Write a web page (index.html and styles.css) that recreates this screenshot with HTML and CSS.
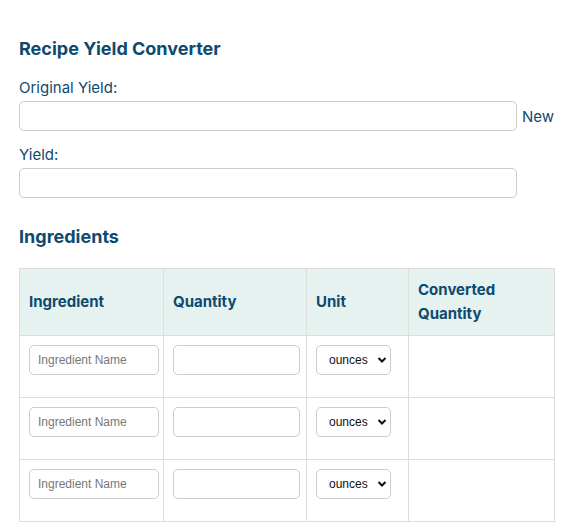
FILE: index.html
```html
<!DOCTYPE html>
<html lang="en">
<head>
<meta charset="utf-8">
<title>Recipe Yield Converter</title>
<link rel="stylesheet" href="styles.css">
</head>
<body>
<div class="page">
  <h2 class="title">Recipe Yield Converter</h2>
  <label class="field-label" for="orig">Original Yield:</label>
  <div class="yield-row">
    <input class="yield-input" id="orig" type="text">
    <span class="inline-label">New</span>
  </div>
  <label class="field-label" for="newy">Yield:</label>
  <div class="yield-row">
    <input class="yield-input" id="newy" type="text">
  </div>

  <h2 class="title section">Ingredients</h2>
  <table class="ing-table">
    <colgroup>
      <col class="c1"><col class="c2"><col class="c3"><col class="c4">
    </colgroup>
    <thead>
      <tr>
        <th>Ingredient</th>
        <th>Quantity</th>
        <th>Unit</th>
        <th>Converted Quantity</th>
      </tr>
    </thead>
    <tbody>
      <tr>
        <td><input class="cell-input name" type="text" placeholder="Ingredient Name"></td>
        <td><input class="cell-input qty" type="text"></td>
        <td><span class="select-wrap"><select class="unit"><option>ounces</option></select><svg class="chev" viewBox="0 0 10 8" width="10" height="8"><path d="M1.5 2 L5 5.5 L8.5 2" fill="none" stroke="#111" stroke-width="2"/></svg></span></td>
        <td></td>
      </tr>
      <tr>
        <td><input class="cell-input name" type="text" placeholder="Ingredient Name"></td>
        <td><input class="cell-input qty" type="text"></td>
        <td><span class="select-wrap"><select class="unit"><option>ounces</option></select><svg class="chev" viewBox="0 0 10 8" width="10" height="8"><path d="M1.5 2 L5 5.5 L8.5 2" fill="none" stroke="#111" stroke-width="2"/></svg></span></td>
        <td></td>
      </tr>
      <tr>
        <td><input class="cell-input name" type="text" placeholder="Ingredient Name"></td>
        <td><input class="cell-input qty" type="text"></td>
        <td><span class="select-wrap"><select class="unit"><option>ounces</option></select><svg class="chev" viewBox="0 0 10 8" width="10" height="8"><path d="M1.5 2 L5 5.5 L8.5 2" fill="none" stroke="#111" stroke-width="2"/></svg></span></td>
        <td></td>
      </tr>
    </tbody>
  </table>
</div>
</body>
</html>
```
FILE: styles.css
```css
html, body {
  margin: 0;
  padding: 0;
  background: #ffffff;
}
body {
  font-family: Inter, "Liberation Sans", Arial, sans-serif;
  color: #0e4a6f;
}
.page {
  padding: 38px 17px 0 19px;
}
.title {
  margin: 0;
  font-size: 18px;
  line-height: 22px;
  font-weight: 700;
  color: #0e4a6f;
}
.field-label {
  display: block;
  font-size: 15px;
  line-height: 20px;
  margin-top: 18px;
  margin-bottom: 3px;
  color: #0e4a6f;
}
.yield-row + .field-label {
  margin-top: 14px;
}
.yield-row {
  display: flex;
  align-items: center;
  gap: 5px;
}
.yield-input {
  box-sizing: border-box;
  width: 498px;
  height: 30px;
  margin: 0;
  border: 1px solid #cccccc;
  border-radius: 5px;
  background: #fff;
  padding: 0 8px;
}
.inline-label {
  font-size: 15px;
  color: #0e4a6f;
}
.section {
  margin-top: 28px;
}
.ing-table {
  margin-top: 20px;
  width: 535px;
  table-layout: fixed;
  border-collapse: collapse;
}
.c1 { width: 144px; }
.c2 { width: 143px; }
.c3 { width: 102px; }
.c4 { width: 146px; }
.ing-table th,
.ing-table td {
  border: 1px solid #dddddd;
  text-align: left;
  vertical-align: middle;
}
.ing-table th {
  background: #e6f2f0;
  font-size: 15px;
  line-height: 24px;
  font-weight: 700;
  padding: 9px 9px 9px 9px;
  color: #0e4a6f;
}
.ing-table td {
  padding: 9px 0 22px 9px;
  vertical-align: top;
  height: 30px;
  overflow: visible;
}
.cell-input {
  display: block;
  box-sizing: border-box;
  height: 30px;
  margin: 0;
  border: 1px solid #cccccc;
  border-radius: 5px;
  background: #fff;
  padding: 0 8px;
  font-family: "Liberation Sans", Arial, sans-serif;
  font-size: 12px;
  color: #333;
}
.cell-input.name { width: 130px; }
.cell-input.qty { width: 127px; }
.cell-input::placeholder {
  color: #777777;
}
.select-wrap {
  position: relative;
  display: block;
  width: 75px;
  height: 30px;
}
.unit {
  -webkit-appearance: none;
  appearance: none;
  box-sizing: border-box;
  width: 75px;
  height: 30px;
  margin: 0;
  border: 1px solid #cccccc;
  border-radius: 5px;
  background: #fff;
  padding: 0 0 0 12px;
  font-family: "Liberation Sans", Arial, sans-serif;
  font-size: 12px;
  color: #111;
}
.chev {
  position: absolute;
  left: 61px;
  top: 11px;
  pointer-events: none;
}
```
